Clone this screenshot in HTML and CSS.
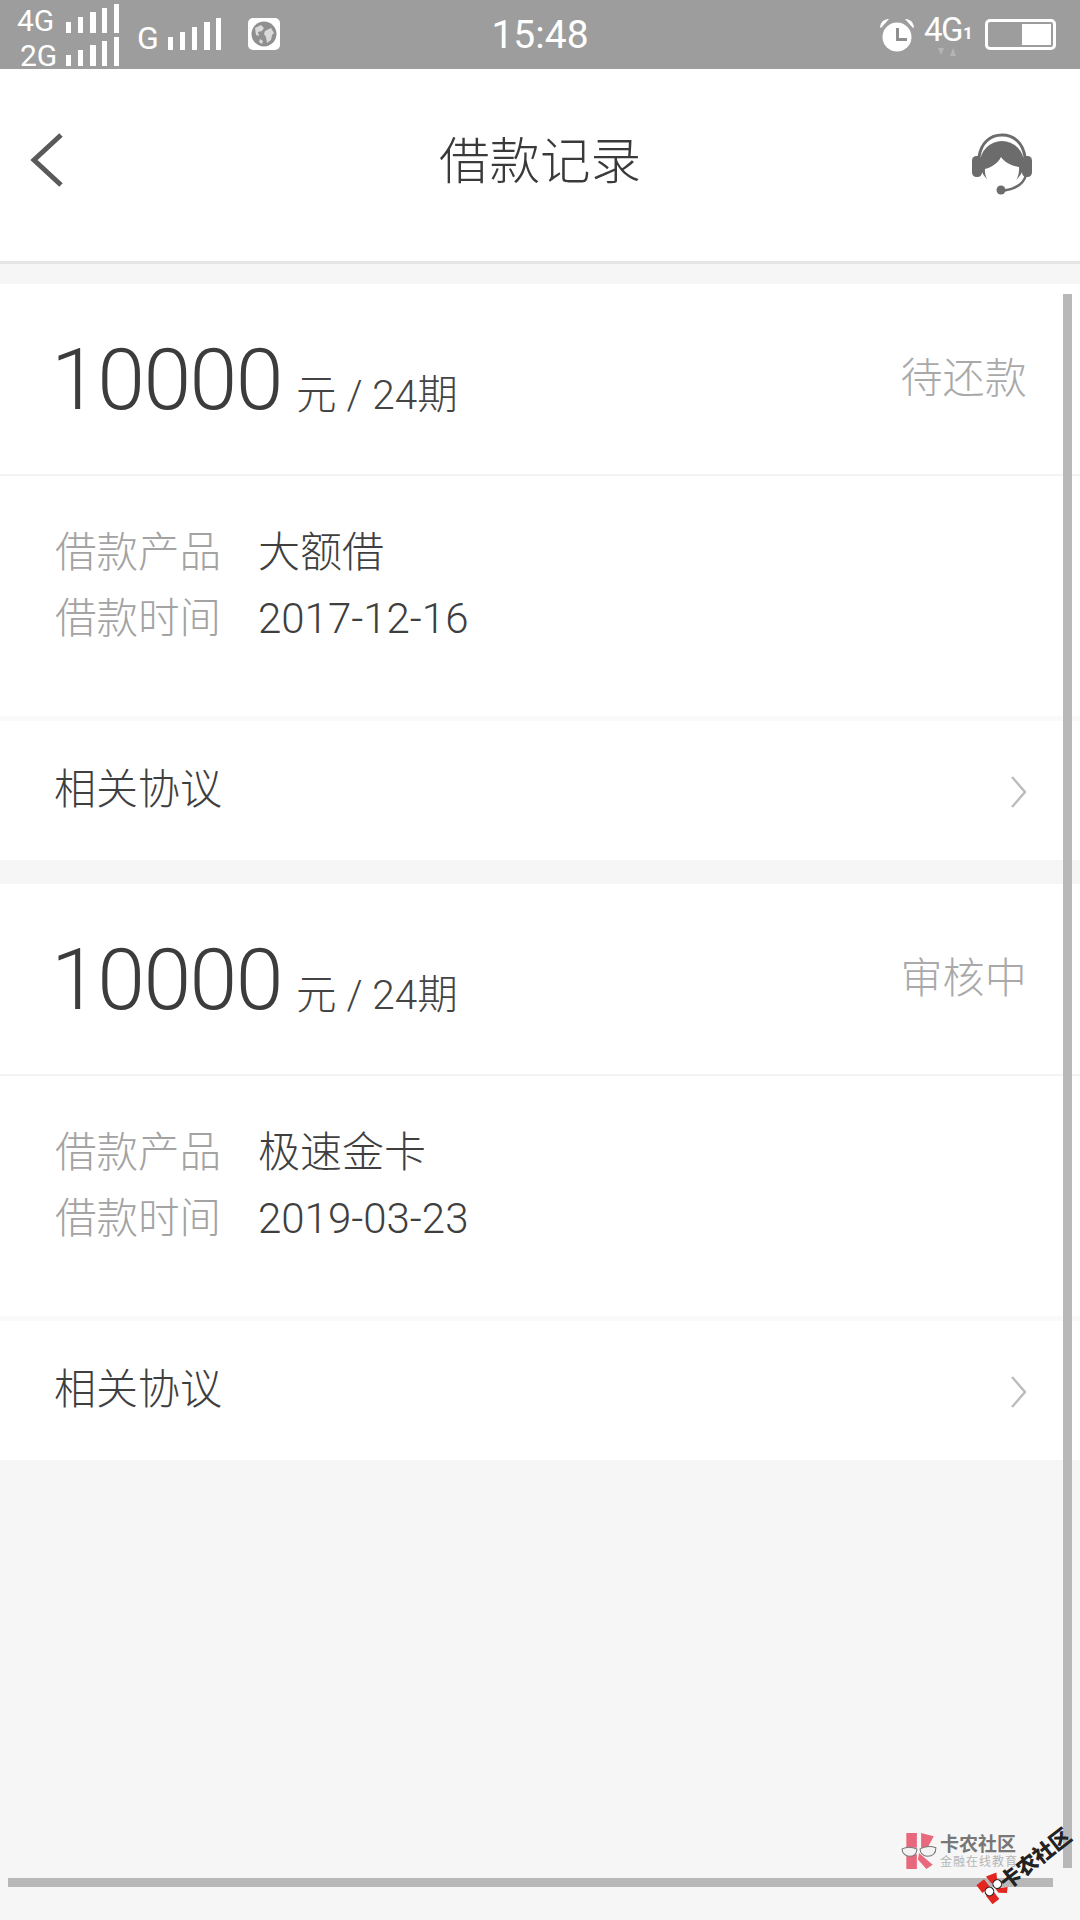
FILE: index.html
```html
<!DOCTYPE html>
<html lang="zh">
<head>
<meta charset="utf-8">
<title>借款记录</title>
<link rel="stylesheet" href="styles.css">
</head>
<body>
<div class="phone">
  <div class="status">
    <div class="sim-stack">
      <div class="sim-line"><span class="net four">4G</span><svg class="bars-sm" viewBox="0 0 53 29"><path d="M0 18h5v11H0zM12 13h5v16h-5zM24 8h6v21h-6zM36 4h5v25h-5zM48 0h5v29h-5z"/></svg></div>
      <div class="sim-line"><span class="net two">2G</span><svg class="bars-sm" viewBox="0 0 53 29"><path d="M0 18h5v11H0zM12 13h5v16h-5zM24 8h6v21h-6zM36 4h5v25h-5zM48 0h5v29h-5z"/></svg></div>
    </div>
    <span class="net g">G</span>
    <svg class="bars" viewBox="0 0 53 32"><path d="M0 19h5v13H0zM12 14h5v18h-5zM24 9h5v23h-5zM36 4h6v28h-6zM48 0h5v32h-5z"/></svg>
    <svg class="globe" viewBox="0 0 32 32"><rect width="32" height="32" rx="5" fill="#fff"/><circle cx="16" cy="16" r="12.5" fill="#8f8f8f"/><path d="M7 10l6-3 3 3-2 3-4 1 1 4-3-1zM17 13l6-3 3 5-2 2-1 5-4 3-1-6-2-3zM12 21l3 2-1 3-3-2z" fill="#d9d9d9"/></svg>
    <span class="clock">15:48</span>
    <div class="status-right">
      <svg class="alarm" viewBox="0 0 34 34"><circle cx="17" cy="19" r="14.5" fill="#fff"/><path d="M0 9C1 3 5 1 9 1L1 10zM34 9C33 3 29 1 25 1l8 9z" fill="#fff"/><path d="M16 10h3v10h8v3H16z" fill="#8f8f8f"/></svg>
      <div class="net-four"><span class="net wide">4G</span><span class="sub">1</span>
        <svg class="arrows" viewBox="0 0 20 10"><path d="M0 1h6L3 8zM12 9l3-8 3 8z" fill="#b4b4b4"/></svg>
      </div>
      <div class="battery"><div class="battery-fill"></div></div>
    </div>
  </div>

  <header class="topbar">
    <svg class="back" viewBox="0 0 34 54"><path d="M31 2L4 27l27 25" fill="none" stroke="#5a5a5a" stroke-width="5"/></svg>
    <h1 class="title">借款记录</h1>
    <svg class="agent" viewBox="0 0 60 62">
      <path d="M7 24C9 10 18 2 30 2s21 8 23 22" fill="none" stroke="#6c6c6c" stroke-width="3"/>
      <circle cx="30" cy="30" r="22" fill="#6c6c6c"/>
      <path d="M13 36c7-2 13-6 16-12 3 5 11 9 18 10 1 12-7 22-17 22-10 0-18-10-17-20z" fill="#fff"/>
      <rect x="0" y="23" width="10" height="21" rx="4.5" fill="#6c6c6c"/>
      <rect x="50" y="23" width="10" height="21" rx="4.5" fill="#6c6c6c"/>
      <path d="M54 42c-2 8-9 14-24 16" fill="none" stroke="#6c6c6c" stroke-width="2.5"/>
      <circle cx="29" cy="57" r="4.5" fill="#6c6c6c"/>
    </svg>
  </header>

  <main class="list">
    <section class="card">
      <div class="card-head">
        <div class="amount"><span class="num">10000</span><span class="unit">元 / 24期</span></div>
        <span class="state">待还款</span>
      </div>
      <div class="card-body">
        <div class="row"><span class="label">借款产品</span><span class="value">大额借</span></div>
        <div class="row"><span class="label">借款时间</span><span class="value">2017-12-16</span></div>
      </div>
      <div class="card-link">
        <span class="link-text">相关协议</span>
        <svg class="chev" viewBox="0 0 18 32"><path d="M2 1l13 15L2 31" fill="none" stroke="#bdbdbd" stroke-width="2.5"/></svg>
      </div>
    </section>
    <section class="card">
      <div class="card-head">
        <div class="amount"><span class="num">10000</span><span class="unit">元 / 24期</span></div>
        <span class="state">审核中</span>
      </div>
      <div class="card-body">
        <div class="row"><span class="label">借款产品</span><span class="value">极速金卡</span></div>
        <div class="row"><span class="label">借款时间</span><span class="value">2019-03-23</span></div>
      </div>
      <div class="card-link">
        <span class="link-text">相关协议</span>
        <svg class="chev" viewBox="0 0 18 32"><path d="M2 1l13 15L2 31" fill="none" stroke="#bdbdbd" stroke-width="2.5"/></svg>
      </div>
    </section>
  </main>

  <div class="scroll-v"></div>
  <div class="scroll-h"></div>

  <div class="mark">
    <svg class="mark-logo" viewBox="0 0 34 36"><path d="M5 1h10v14H5zM19 1l12 3-7 13-5-2zM5 21h10v14H5zM17 20l13 11-6 4-8-9z" fill="#e8697d"/><path d="M1 16c4-2 9-2 14 0 0 5-3 7-7 7s-7-3-7-7zM18 16c4-2 10-3 15-1 0 5-3 8-8 8-4 0-7-3-7-7z" fill="#f3f3f3" stroke="#777" stroke-width="1"/></svg>
    <div class="mark-text"><span class="mark-name">卡农社区</span><span class="mark-sub">金融在线教育</span></div>
  </div>
  <div class="stamp">
    <svg class="stamp-logo" viewBox="0 0 26 26"><path d="M2 2h9v9H2zM14 1l10 3-5 8-5-3zM3 15h8v10H3zM14 15l10 6-4 4-6-5z" fill="#e3261f"/><circle cx="8" cy="14" r="4" fill="#fff" stroke="#222"/><circle cx="18" cy="13" r="4" fill="#fff" stroke="#222"/></svg>
    <span class="stamp-text">卡农社区</span>
  </div>
</div>
</body>
</html>
```
FILE: styles.css
```css
* { box-sizing: border-box; margin: 0; padding: 0; }
html, body { width: 1080px; height: 1920px; overflow: hidden; }
body { background: #f6f6f6; font-family: Roboto, "Noto Sans CJK SC", sans-serif; }
.phone { position: relative; width: 1080px; height: 1920px; background: #f6f6f6; }

.status { height: 69px; background: #9d9d9d; color: #fff; display: flex; align-items: center; padding-left: 17px; position: relative; }
.sim-stack { display: flex; flex-direction: column; gap: 4px; width: 102px; align-self: flex-start; padding-top: 4px; }
.sim-line { display: flex; align-items: flex-end; height: 29px; justify-content: space-between; }
.net { font-size: 32px; line-height: 29px; letter-spacing: -1px; }
.four { font-size: 30px; letter-spacing: 0; margin-bottom: -2px; }
.two { font-size: 30px; letter-spacing: 0; margin-left: 3px; margin-bottom: -4px; }
.bars-sm { width: 53px; height: 29px; fill: #fff; }
.g { margin-left: 18px; margin-top: 7px; width: 31px; font-size: 32px; }
.bars { width: 53px; height: 32px; fill: #fff; margin-top: -1px; }
.globe { width: 32px; height: 32px; margin-left: 27px; margin-top: -1px; }
.clock { position: absolute; left: 0; right: 0; top: 11px; text-align: center; font-size: 39px; line-height: 48px; font-weight: 400; }
.status-right { margin-left: auto; display: flex; align-items: center; margin-right: 24px; }
.alarm { width: 34px; height: 34px; margin-top: 1px; margin-left: -1px; }
.net-four { display: flex; align-items: flex-end; margin-left: 10px; width: 61px; margin-top: -10px; position: relative; }
.wide { font-size: 33px; letter-spacing: -1.5px; }
.sub { font-size: 17px; line-height: 21px; font-weight: 700; margin-left: 1px; }
.arrows { position: absolute; left: 14px; top: 32px; width: 20px; height: 10px; }
.battery { width: 71px; height: 31px; border: 3px solid #fff; border-radius: 5px; display: flex; justify-content: flex-end; padding: 2px; }
.battery-fill { width: 29px; background: #fff; }

.topbar { height: 195px; background: #fff; border-bottom: 3px solid #e5e5e5; display: flex; align-items: center; justify-content: space-between; padding: 0 48px 0 30px; position: relative; }
.back { width: 34px; height: 54px; margin-top: -11px; }
.title { position: absolute; left: 0; right: 0; text-align: center; font-weight: 300; font-size: 50.5px; line-height: 60px; color: #3a3a3a; margin-top: -6px; }
.agent { width: 60px; height: 62px; margin-top: -3px; }

.list { padding-top: 20px; display: flex; flex-direction: column; gap: 24px; }
.card { background: #fff; display: flex; flex-direction: column; }
.card-head { height: 192px; border-bottom: 2px solid #f3f3f3; display: flex; justify-content: space-between; align-items: flex-start; padding: 0 52px 0 51px; }
.amount { display: flex; align-items: baseline; margin-top: 46px; color: #3c3c3c; }
.num { font-size: 86px; line-height: 100px; font-weight: 300; letter-spacing: -1.5px; }
.unit { font-size: 40.5px; font-weight: 300; margin-left: 14px; color: #444; }
.state { font-size: 42px; line-height: 50px; font-weight: 300; color: #a9a9a9; margin-top: 70px; margin-right: 1px; letter-spacing: 0.2px; }

.card-body { height: 245px; padding: 42px 55px 0; border-bottom: 5px solid #fafafa; }
.row { display: flex; align-items: baseline; height: 67px; }
.label { width: 203px; font-size: 41.5px; font-weight: 300; color: #a3a3a3; }
.value { font-size: 42px; font-weight: 300; color: #3f3f3f; }
.card-link { height: 139px; display: flex; align-items: center; justify-content: space-between; padding: 0 52px 0 54px; }
.link-text { font-size: 42px; font-weight: 300; color: #3f3f3f; margin-top: -11px; }
.chev { width: 18px; height: 32px; margin-top: 3px; }

.scroll-v { position: absolute; left: 1063px; top: 294px; width: 9px; height: 1574px; background: #b8b8b8; }
.scroll-h { position: absolute; left: 8px; top: 1878px; width: 1045px; height: 9px; background: #b8b8b8; }

.mark { position: absolute; left: 901px; top: 1832px; display: flex; align-items: center; gap: 3px; }
.mark-logo { width: 36px; height: 38px; }
.mark-text { display: flex; flex-direction: column; }
.mark-name { font-size: 19px; line-height: 21px; font-weight: 700; color: #777; white-space: nowrap; }
.mark-sub { font-size: 12px; line-height: 14px; color: #b5b5b5; white-space: nowrap; letter-spacing: 1px; }
.stamp { position: absolute; left: 982px; top: 1879px; display: flex; align-items: center; gap: 0; transform: rotate(-38deg); transform-origin: left center; }
.stamp-logo { width: 28px; height: 28px; }
.stamp-text { font-size: 21px; line-height: 26px; font-weight: 900; color: #222; white-space: nowrap; margin-left: -5px; margin-top: 8px; }
```
